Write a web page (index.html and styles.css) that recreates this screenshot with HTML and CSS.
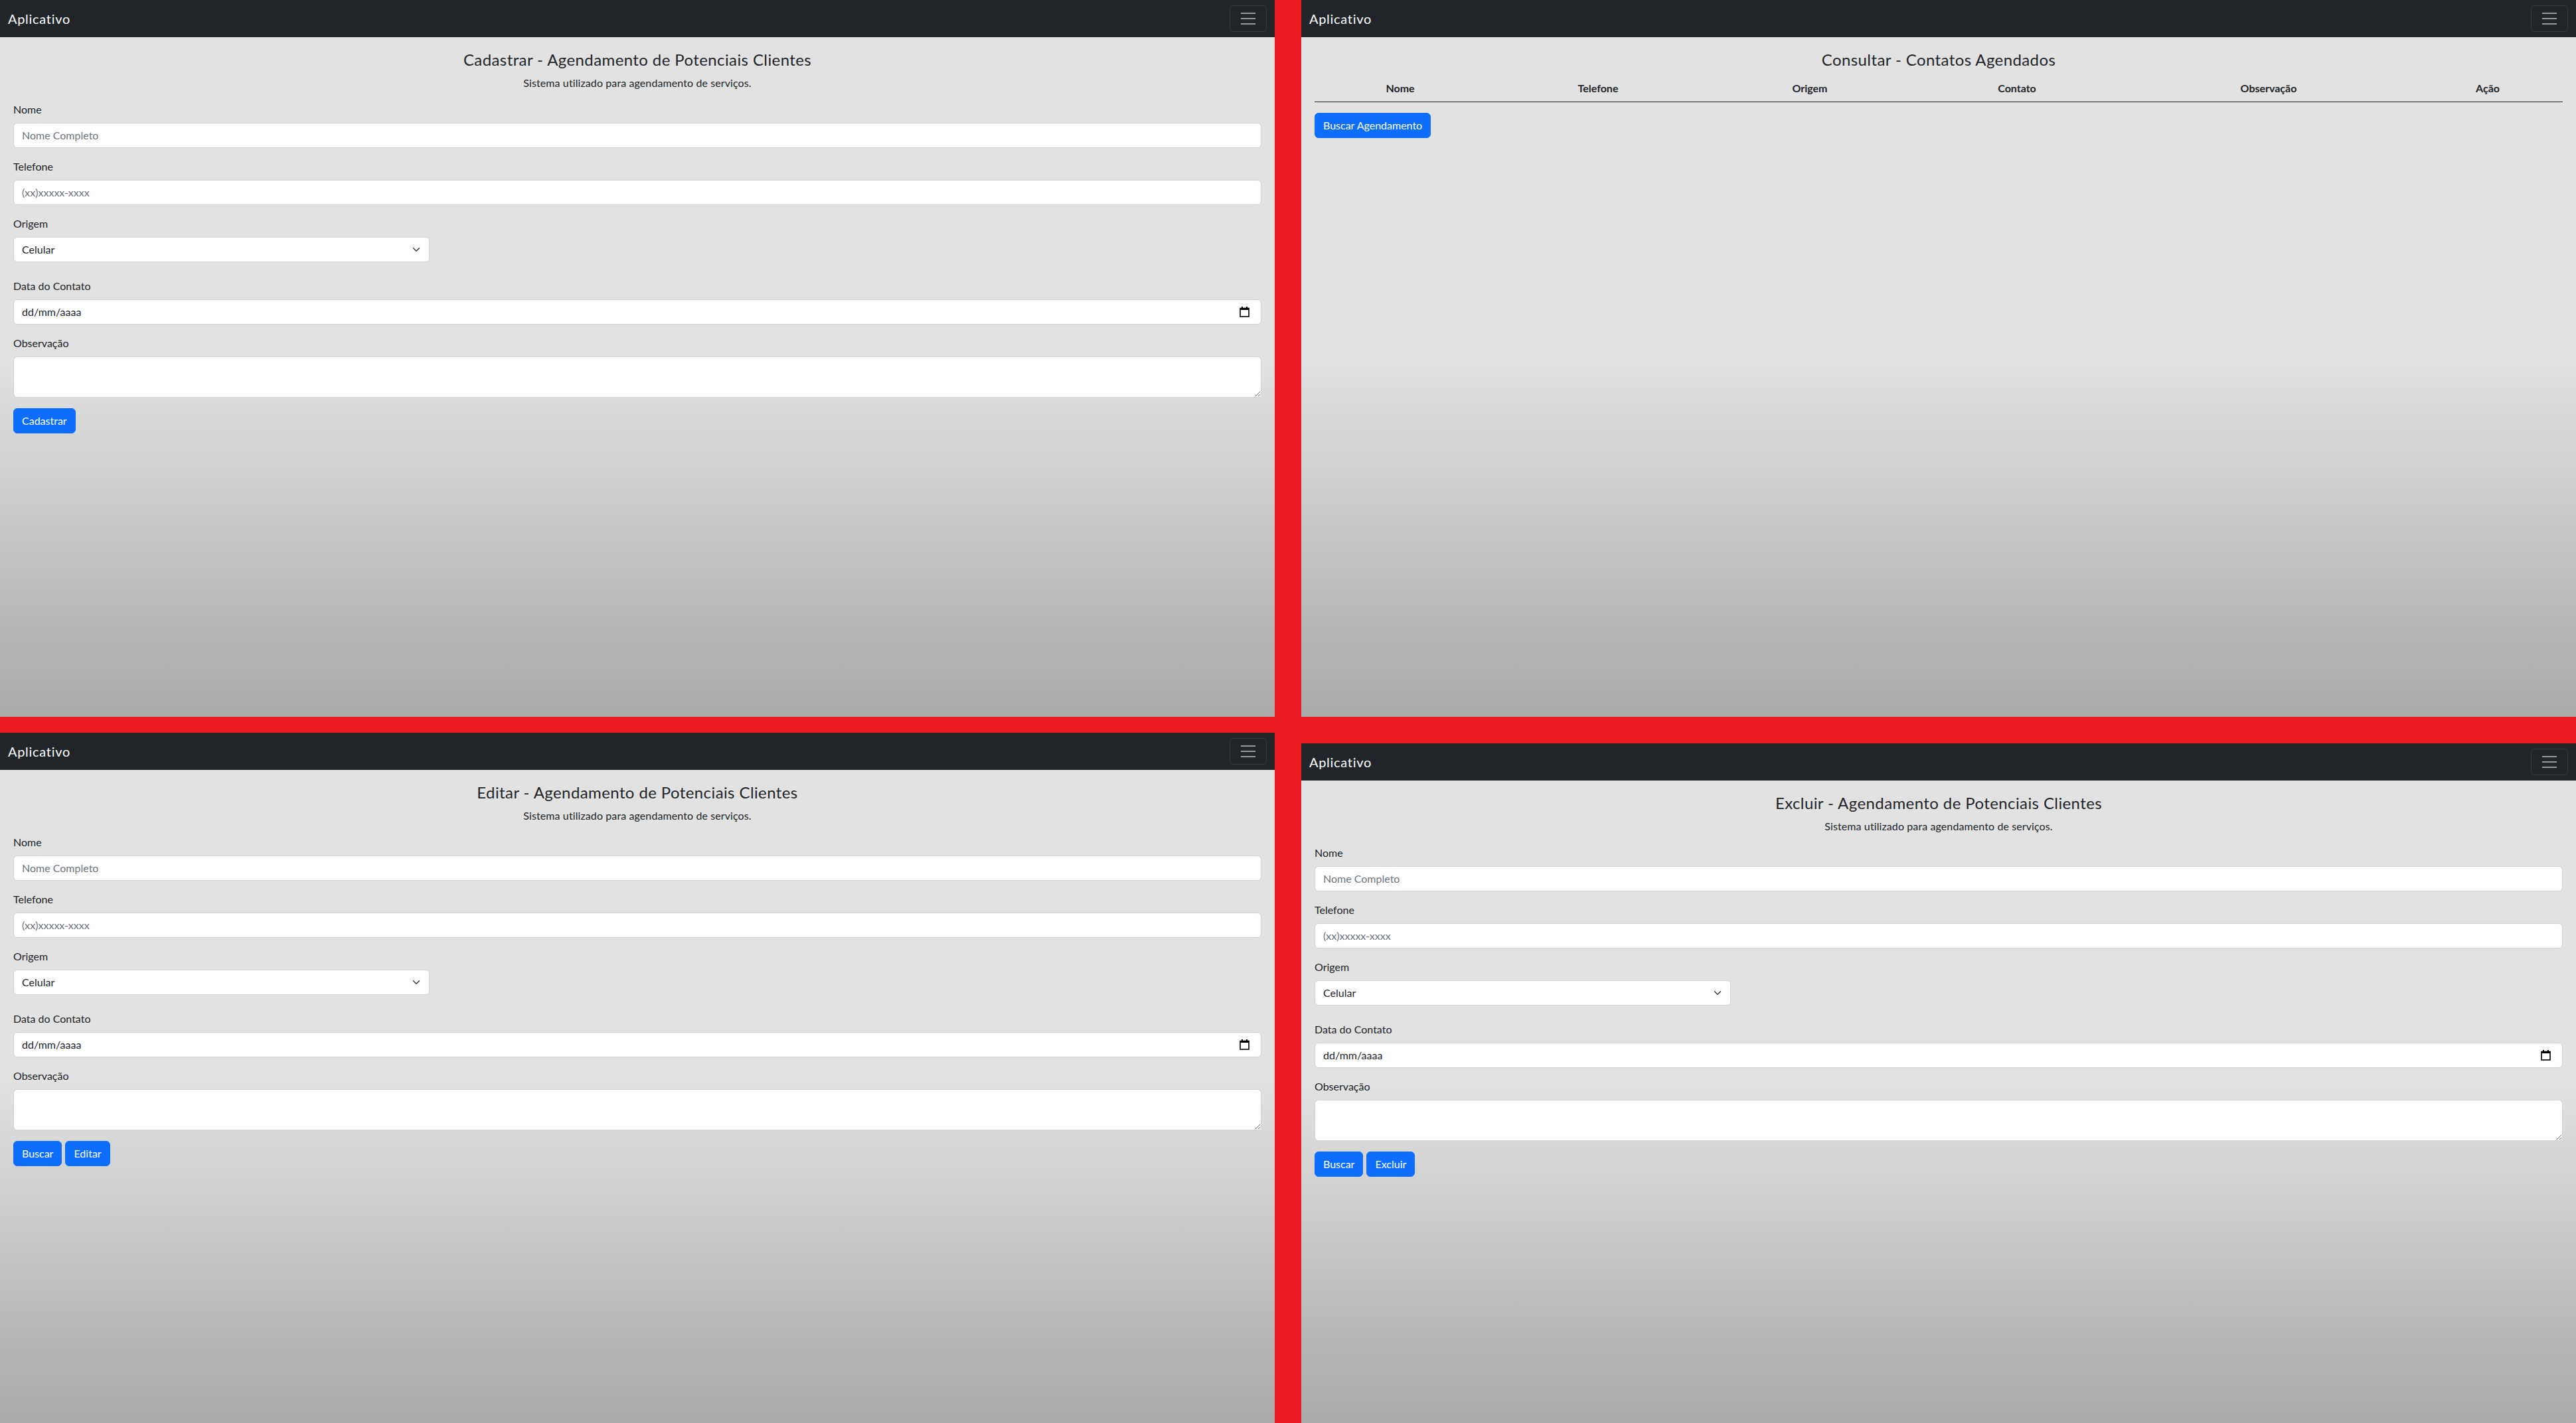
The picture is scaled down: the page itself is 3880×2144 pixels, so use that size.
FILE: index.html
```html
<!DOCTYPE html>
<html lang="pt-BR">

<head>
    <meta charset="UTF-8">
    <meta name="viewport" content="width=device-width, initial-scale=1.0">
    <title>Aplicativo - Agendamento</title>
    <link rel="stylesheet" href="styles.css">
</head>

<body>
    <div class="mosaic">
        <div class="column column-left">

            <!-- Cadastrar -->
            <section class="screen screen-full">
                <nav class="navbar">
                    <span class="brand">Aplicativo</span>
                    <span class="toggler">
                        <svg width="30" height="30" viewBox="0 0 30 30"><path d="M4 7h22M4 15h22M4 23h22" stroke="rgba(255,255,255,0.55)" stroke-width="2" /></svg>
                    </span>
                </nav>
                <div class="content">
                    <h4 class="title">Cadastrar - Agendamento de Potenciais Clientes</h4>
                    <p class="subtitle">Sistema utilizado para agendamento de serviços.</p>

                    <div class="group">
                        <label class="form-label">Nome</label>
                        <input class="form-control" type="text" placeholder="Nome Completo">
                    </div>
                    <div class="group">
                        <label class="form-label">Telefone</label>
                        <input class="form-control" type="text" placeholder="(xx)xxxxx-xxxx">
                    </div>
                    <div class="group group-select">
                        <label class="form-label">Origem</label>
                        <div class="form-control form-select">
                            <span>Celular</span>
                            <svg width="12" height="12" viewBox="0 0 16 16"><path d="m2 5 6 6 6-6" fill="none" stroke="#343a40" stroke-width="2" stroke-linecap="round" stroke-linejoin="round" /></svg>
                        </div>
                    </div>
                    <div class="group">
                        <label class="form-label">Data do Contato</label>
                        <div class="form-control form-date">
                            <span>dd/mm/aaaa</span>
                            <svg width="15" height="17" viewBox="0 0 15 17"><rect x="1" y="3.5" width="13" height="12.5" fill="none" stroke="#000" stroke-width="1.6" /><rect x="1" y="3" width="13" height="3" fill="#000" /><rect x="3" y="1" width="2" height="3" fill="#000" /><rect x="10" y="1" width="2" height="3" fill="#000" /></svg>
                        </div>
                    </div>
                    <div class="group">
                        <label class="form-label">Observação</label>
                        <textarea class="form-control form-area" rows="2"></textarea>
                    </div>
                    <div class="actions">
                        <button class="btn">Cadastrar</button>
                    </div>
                </div>
            </section>

            <!-- Editar -->
            <section class="screen screen-left-bottom">
                <nav class="navbar">
                    <span class="brand">Aplicativo</span>
                    <span class="toggler">
                        <svg width="30" height="30" viewBox="0 0 30 30"><path d="M4 7h22M4 15h22M4 23h22" stroke="rgba(255,255,255,0.55)" stroke-width="2" /></svg>
                    </span>
                </nav>
                <div class="content">
                    <h4 class="title">Editar - Agendamento de Potenciais Clientes</h4>
                    <p class="subtitle">Sistema utilizado para agendamento de serviços.</p>

                    <div class="group">
                        <label class="form-label">Nome</label>
                        <input class="form-control" type="text" placeholder="Nome Completo">
                    </div>
                    <div class="group">
                        <label class="form-label">Telefone</label>
                        <input class="form-control" type="text" placeholder="(xx)xxxxx-xxxx">
                    </div>
                    <div class="group group-select">
                        <label class="form-label">Origem</label>
                        <div class="form-control form-select">
                            <span>Celular</span>
                            <svg width="12" height="12" viewBox="0 0 16 16"><path d="m2 5 6 6 6-6" fill="none" stroke="#343a40" stroke-width="2" stroke-linecap="round" stroke-linejoin="round" /></svg>
                        </div>
                    </div>
                    <div class="group">
                        <label class="form-label">Data do Contato</label>
                        <div class="form-control form-date">
                            <span>dd/mm/aaaa</span>
                            <svg width="15" height="17" viewBox="0 0 15 17"><rect x="1" y="3.5" width="13" height="12.5" fill="none" stroke="#000" stroke-width="1.6" /><rect x="1" y="3" width="13" height="3" fill="#000" /><rect x="3" y="1" width="2" height="3" fill="#000" /><rect x="10" y="1" width="2" height="3" fill="#000" /></svg>
                        </div>
                    </div>
                    <div class="group">
                        <label class="form-label">Observação</label>
                        <textarea class="form-control form-area" rows="2"></textarea>
                    </div>
                    <div class="actions">
                        <button class="btn">Buscar</button>
                        <button class="btn">Editar</button>
                    </div>
                </div>
            </section>
        </div>

        <div class="column column-right">

            <!-- Consultar -->
            <section class="screen screen-full">
                <nav class="navbar">
                    <span class="brand">Aplicativo</span>
                    <span class="toggler">
                        <svg width="30" height="30" viewBox="0 0 30 30"><path d="M4 7h22M4 15h22M4 23h22" stroke="rgba(255,255,255,0.55)" stroke-width="2" /></svg>
                    </span>
                </nav>
                <div class="content">
                    <h4 class="title">Consultar - Contatos Agendados</h4>
                    <table class="table">
                        <colgroup>
                            <col class="c-nome">
                            <col class="c-telefone">
                            <col class="c-origem">
                            <col class="c-contato">
                            <col class="c-obs">
                            <col class="c-acao">
                        </colgroup>
                        <thead>
                            <tr>
                                <th>Nome</th>
                                <th>Telefone</th>
                                <th>Origem</th>
                                <th>Contato</th>
                                <th>Observação</th>
                                <th>Ação</th>
                            </tr>
                        </thead>
                        <tbody id="lista"></tbody>
                    </table>
                    <div class="actions">
                        <button class="btn">Buscar Agendamento</button>
                    </div>
                </div>
            </section>

            <!-- Excluir -->
            <section class="screen screen-right-bottom">
                <nav class="navbar">
                    <span class="brand">Aplicativo</span>
                    <span class="toggler">
                        <svg width="30" height="30" viewBox="0 0 30 30"><path d="M4 7h22M4 15h22M4 23h22" stroke="rgba(255,255,255,0.55)" stroke-width="2" /></svg>
                    </span>
                </nav>
                <div class="content">
                    <h4 class="title">Excluir - Agendamento de Potenciais Clientes</h4>
                    <p class="subtitle">Sistema utilizado para agendamento de serviços.</p>

                    <div class="group">
                        <label class="form-label">Nome</label>
                        <input class="form-control" type="text" placeholder="Nome Completo">
                    </div>
                    <div class="group">
                        <label class="form-label">Telefone</label>
                        <input class="form-control" type="text" placeholder="(xx)xxxxx-xxxx">
                    </div>
                    <div class="group group-select">
                        <label class="form-label">Origem</label>
                        <div class="form-control form-select">
                            <span>Celular</span>
                            <svg width="12" height="12" viewBox="0 0 16 16"><path d="m2 5 6 6 6-6" fill="none" stroke="#343a40" stroke-width="2" stroke-linecap="round" stroke-linejoin="round" /></svg>
                        </div>
                    </div>
                    <div class="group">
                        <label class="form-label">Data do Contato</label>
                        <div class="form-control form-date">
                            <span>dd/mm/aaaa</span>
                            <svg width="15" height="17" viewBox="0 0 15 17"><rect x="1" y="3.5" width="13" height="12.5" fill="none" stroke="#000" stroke-width="1.6" /><rect x="1" y="3" width="13" height="3" fill="#000" /><rect x="3" y="1" width="2" height="3" fill="#000" /><rect x="10" y="1" width="2" height="3" fill="#000" /></svg>
                        </div>
                    </div>
                    <div class="group">
                        <label class="form-label">Observação</label>
                        <textarea class="form-control form-area" rows="2"></textarea>
                    </div>
                    <div class="actions">
                        <button class="btn">Buscar</button>
                        <button class="btn">Excluir</button>
                    </div>
                </div>
            </section>
        </div>
    </div>
</body>

</html>
```

FILE: styles.css
```css
body {
    margin: 0;
    background-color: #ed1c24;
    font-family: Lato, "Open Sans", sans-serif;
    color: #212529;
    overflow: hidden;
}

.mosaic {
    display: flex;
    gap: 40px;
    width: 3880px;
    height: 2144px;
}

.column {
    width: 1920px;
    display: flex;
    flex-direction: column;
}

.column-left {
    gap: 24px;
}

.column-right {
    gap: 40px;
}

.screen {
    background: linear-gradient(to bottom, #e2e2e2 50%, #a9a9a9 100%);
    overflow: hidden;
}

.screen-full {
    height: 1080px;
}

.screen-left-bottom {
    height: 1040px;
}

.screen-right-bottom {
    height: 1024px;
}

/* navbar */
.navbar {
    height: 56px;
    box-sizing: border-box;
    padding: 8px 12px;
    background-color: #212529;
    display: flex;
    align-items: center;
    justify-content: space-between;
}

.brand {
    color: #fff;
    font-size: 20px;
    line-height: 30px;
    letter-spacing: 0.7px;
}

.toggler {
    width: 56px;
    height: 40px;
    box-sizing: border-box;
    border: 1px solid rgba(255, 255, 255, 0.1);
    border-radius: 6px;
    display: flex;
    align-items: center;
    justify-content: center;
}

/* page content */
.content {
    padding: 0 20px;
}

.title {
    margin: 20px 0 8px;
    font-size: 24px;
    font-weight: 400;
    line-height: 1.2;
    letter-spacing: 0.4px;
    text-align: center;
}

.subtitle {
    margin: 0 0 16px;
    font-size: 16px;
    line-height: 24px;
    letter-spacing: 0.1px;
    text-align: center;
}

.group {
    margin-bottom: 16px;
}

.group-select {
    margin-bottom: 24px;
}

.form-label {
    display: block;
    margin-bottom: 8px;
    font-size: 16px;
    line-height: 24px;
}

.form-control {
    display: block;
    width: 100%;
    height: 38px;
    box-sizing: border-box;
    padding: 6px 12px;
    font-family: inherit;
    font-size: 16px;
    line-height: 24px;
    color: #212529;
    background-color: #fff;
    border: 1px solid #ced4da;
    border-radius: 6px;
    outline: none;
}

.form-control::placeholder {
    color: #6c757d;
    opacity: 1;
}

.form-select {
    width: calc(100% / 3);
    display: flex;
    align-items: center;
    justify-content: space-between;
    padding-right: 13px;
}

.form-date {
    display: flex;
    align-items: center;
    justify-content: space-between;
    padding-right: 17px;
}

.form-area {
    height: 62px;
    resize: both;
}

/* table */
.table {
    width: 100%;
    border-collapse: collapse;
    margin-bottom: 16px;
}

.table th {
    padding: 8px;
    font-size: 16px;
    line-height: 24px;
    font-weight: 700;
    text-align: center;
    border-bottom: 1px solid #212529;
}

.c-nome {
    width: 258px;
}

.c-telefone {
    width: 338px;
}

.c-origem {
    width: 300px;
}

.c-contato {
    width: 324px;
}

.c-obs {
    width: 434px;
}

.c-acao {
    width: 226px;
}

/* buttons */
.actions {
    display: flex;
    gap: 5px;
}

.btn {
    padding: 6px 12px;
    font-family: inherit;
    font-size: 16px;
    line-height: 24px;
    color: #fff;
    background-color: #0d6efd;
    border: 1px solid #0d6efd;
    border-radius: 6px;
    cursor: pointer;
}
```
